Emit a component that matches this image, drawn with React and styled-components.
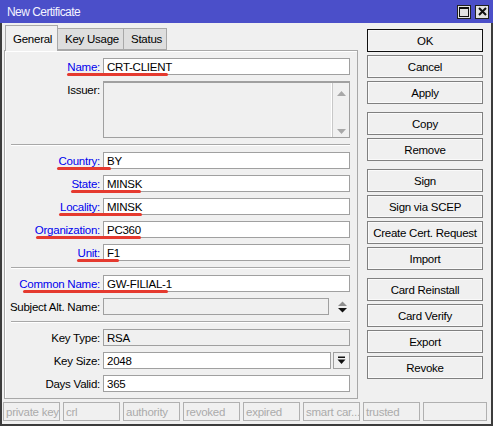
import styled, { createGlobalStyle } from "styled-components";

const Global = createGlobalStyle`
  html, body {
    margin: 0;
    padding: 0;
    background: #ffffff;
  }
  body {
    font-family: "Liberation Sans", Arial, sans-serif;
    font-size: 11px;
    letter-spacing: -0.25px;
    color: #000;
  }
`;

const Window = styled.div`
  width: 493px;
  height: 426px;
  box-sizing: border-box;
  display: flex;
  flex-direction: column;
  background: #f0f0f0;
  border: 2px solid #3c3c3c;
  border-top: none;
`;

const TitleBar = styled.div`
  height: 23px;
  margin: 0 -2px;
  padding: 0 4px 0 7px;
  display: flex;
  align-items: center;
  background: #4b4fc9;
  color: #f4f4ff;
  font-size: 12px;
  letter-spacing: -0.55px;
`;

const TitleText = styled.span`
  flex: 1;
`;

const TitleButton = styled.div`
  width: 14px;
  height: 14px;
  box-sizing: border-box;
  margin-left: 4px;
  background: #e2e2e2;
  border: 1px solid #202020;
  display: flex;
  align-items: center;
  justify-content: center;
`;

const Body = styled.div`
  display: flex;
  gap: 9px;
  padding: 2px 8px 0 2px;
`;

const LeftCol = styled.div`
  width: 354px;
  display: flex;
  flex-direction: column;
`;

const Tabs = styled.div`
  display: flex;
  align-items: flex-end;
  height: 25px;
  padding-left: 1px;
  position: relative;
  z-index: 1;
`;

const Tab = styled.div`
  box-sizing: border-box;
  width: ${(p) => p.$w}px;
  height: ${(p) => (p.$active ? 26 : 22)}px;
  margin-bottom: ${(p) => (p.$active ? -1 : 0)}px;
  padding-left: 7px;
  display: flex;
  align-items: center;
  background: ${(p) => (p.$active ? "#f0f0f0" : "#dedede")};
  border: 1px solid #a8a8a8;
  border-bottom: ${(p) => (p.$active ? "none" : "1px solid #a8a8a8")};
  border-left: ${(p) => (p.$first || p.$active ? "1px solid #a8a8a8" : "none")};
  font-size: 11.5px;
`;

const Panel = styled.div`
  display: flex;
  flex-direction: column;
  gap: 6px;
  padding: 7px 7px 6px 6px;
  border: 1px solid #a8a8a8;
  box-shadow: inset 1px 1px 0 #ffffff;
`;

const Row = styled.div`
  position: relative;
  display: flex;
  align-items: ${(p) => (p.$top ? "flex-start" : "center")};
  gap: 3px;
  height: ${(p) => p.$h || 17}px;
`;

const Label = styled.div`
  width: 89px;
  flex: none;
  display: flex;
  justify-content: flex-end;
  white-space: nowrap;
  padding-top: ${(p) => (p.$top ? 3 : 0)}px;
  color: ${(p) => (p.$blue ? "#0000ee" : "#000")};
  font-size: 11.5px;
`;

const Field = styled.div`
  flex: 1;
  height: 17px;
  box-sizing: border-box;
  padding-left: 3px;
  display: flex;
  align-items: center;
  background: ${(p) => (p.$grey ? "#f0f0f0" : "#ffffff")};
  border: 1px solid #a0a0a0;
  font-size: 11.5px;
  white-space: nowrap;
`;

const TextArea = styled.div`
  flex: 1;
  height: 57px;
  box-sizing: border-box;
  display: flex;
  background: #f0f0f0;
  border: 1px solid #a0a0a0;
  border-top: 2px solid #a0a0a0;
`;

const TextAreaBody = styled.div`
  flex: 1;
  border-right: 1px solid #ffffff;
`;

const ScrollTrack = styled.div`
  width: 16px;
  display: flex;
  flex-direction: column;
  align-items: center;
  justify-content: space-between;
  padding: 8px 0 3px;
  border-left: 1px solid #c8c8c8;
`;

const SideIcon = styled.div`
  width: 16px;
  height: 17px;
  flex: none;
  display: flex;
  align-items: center;
  justify-content: center;
  margin-left: 2px;
`;

const DropButton = styled.div`
  width: 17px;
  height: 17px;
  box-sizing: border-box;
  flex: none;
  margin-left: -1px;
  border: 1px solid #a0a0a0;
  display: flex;
  align-items: center;
  justify-content: center;
`;

const Separator = styled.div`
  height: 0;
  border-top: 1px solid #a8a8a8;
  border-bottom: 1px solid #ffffff;
`;

const Mark = styled.div`
  position: absolute;
  top: 15px;
  height: 3px;
  border-radius: 2px;
  background: #e53a2f;
  pointer-events: none;
`;

const ButtonCol = styled.div`
  width: 116px;
  padding-top: 4px;
  display: flex;
  flex-direction: column;
  gap: 8px;
`;

const ButtonGroup = styled.div`
  display: flex;
  flex-direction: column;
  gap: 3px;
`;

const Button = styled.div`
  height: 23px;
  box-sizing: border-box;
  display: flex;
  align-items: center;
  justify-content: center;
  background: #f0f0f0;
  border: 1px solid ${(p) => (p.$default ? "#101010" : "#808080")};
  box-shadow: inset 0 0 0 1px ${(p) => (p.$default ? "#f6f6f6" : "#fafafa")};
  font-size: 11.5px;
  white-space: nowrap;
`;

const StatusBar = styled.div`
  display: flex;
  gap: 3px;
  margin-top: 3px;
  padding-left: 1px;
`;

const StatusCell = styled.div`
  width: ${(p) => p.$w || 57}px;
  height: 19px;
  box-sizing: border-box;
  padding-left: 2px;
  display: flex;
  align-items: center;
  border: 1px solid #b0b0b0;
  color: #ababab;
  font-size: 11.5px;
  white-space: nowrap;
  overflow: hidden;
`;

const marks = {
  Name: [56, 101],
  Country: [46, 54],
  State: [60, 70],
  Locality: [48, 83],
  Organization: [25, 105],
  Unit: [66, 42],
  "Common Name": [12, 145],
};

function Line({ label, value, blue, grey, children }) {
  const m = marks[label];
  return (
    <Row>
      <Label $blue={blue}>{label}:</Label>
      <Field $grey={grey}>{value}</Field>
      {children}
      {m && <Mark style={{ left: m[0], width: m[1] }} />}
    </Row>
  );
}

const Tri = ({ up, color }) => (
  <svg width="9" height="5" viewBox="0 0 9 5">
    <polygon points={up ? "0,5 9,5 4.5,0" : "0,0 9,0 4.5,5"} fill={color} />
  </svg>
);

const groups = [
  ["OK", "Cancel", "Apply"],
  ["Copy", "Remove"],
  ["Sign", "Sign via SCEP", "Create Cert. Request", "Import"],
  ["Card Reinstall", "Card Verify", "Export", "Revoke"],
];

const status = ["private key", "crl", "authority", "revoked", "expired", "smart car...", "trusted"];

export default function App() {
  return (
    <>
      <Global />
      <Window>
        <TitleBar>
          <TitleText>New Certificate</TitleText>
          <TitleButton>
            <svg width="10" height="10" viewBox="0 0 10 10">
              <rect x="0.5" y="0.5" width="9" height="9" fill="none" stroke="#111" />
              <rect x="0.5" y="0.5" width="9" height="1.5" fill="#111" />
            </svg>
          </TitleButton>
          <TitleButton>
            <svg width="9" height="9" viewBox="0 0 9 9">
              <path d="M1 1 L8 8 M8 1 L1 8" stroke="#111" strokeWidth="2" />
            </svg>
          </TitleButton>
        </TitleBar>
        <Body>
          <LeftCol>
            <Tabs>
              <Tab $w={53} $active $first>General</Tab>
              <Tab $w={66}>Key Usage</Tab>
              <Tab $w={43}>Status</Tab>
            </Tabs>
            <Panel>
              <Line label="Name" value="CRT-CLIENT" blue />
              <Row $h={57} $top>
                <Label $top>Issuer:</Label>
                <TextArea>
                  <TextAreaBody />
                  <ScrollTrack>
                    <Tri up color="#a8a8a8" />
                    <Tri color="#a8a8a8" />
                  </ScrollTrack>
                </TextArea>
              </Row>
              <Separator />
              <Line label="Country" value="BY" blue />
              <Line label="State" value="MINSK" blue />
              <Line label="Locality" value="MINSK" blue />
              <Line label="Organization" value="PC360" blue />
              <Line label="Unit" value="F1" blue />
              <Separator />
              <Line label="Common Name" value="GW-FILIAL-1" blue />
              <Line label="Subject Alt. Name" value="" grey>
                <SideIcon>
                  <svg width="11" height="12" viewBox="0 0 11 12">
                    <polygon points="1,5 10,5 5.5,0.5" fill="#8f8f8f" />
                    <polygon points="1,7 10,7 5.5,11.5" fill="#111" />
                  </svg>
                </SideIcon>
              </Line>
              <Separator />
              <Line label="Key Type" value="RSA" grey />
              <Line label="Key Size" value="2048">
                <DropButton>
                  <svg width="9" height="9" viewBox="0 0 9 9">
                    <rect x="1" y="0.5" width="7" height="1.5" fill="#111" />
                    <polygon points="0.5,3.5 8.5,3.5 4.5,8" fill="#111" />
                  </svg>
                </DropButton>
              </Line>
              <Line label="Days Valid" value="365" />
            </Panel>
          </LeftCol>
          <ButtonCol>
            {groups.map((g, i) => (
              <ButtonGroup key={i}>
                {g.map((b) => (
                  <Button key={b} $default={b === "OK"}>
                    {b}
                  </Button>
                ))}
              </ButtonGroup>
            ))}
          </ButtonCol>
        </Body>
        <StatusBar>
          {status.map((s) => (
            <StatusCell key={s}>{s}</StatusCell>
          ))}
          <StatusCell $w={64} />
        </StatusBar>
      </Window>
    </>
  );
}
